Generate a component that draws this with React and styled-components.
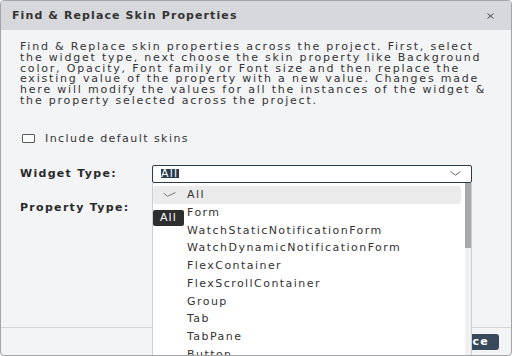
import React from "react";
import styled, { createGlobalStyle } from "styled-components";

const Global = createGlobalStyle`
  html, body { margin: 0; padding: 0; }
  body { width: 512px; height: 356px; overflow: hidden; background: #f3f4f6; font-family: "DejaVu Sans", "Liberation Sans", sans-serif; }
  * { box-sizing: border-box; }
`;

const Dialog = styled.div`
  width: 512px;
  height: 356px;
  border: 1px solid #a3a5a8;
  border-radius: 4px;
  overflow: hidden;
  display: flex;
  flex-direction: column;
  background: #f3f4f6;
`;

const Header = styled.div`
  height: 29px;
  flex: none;
  background: #d6d8dc;
  display: flex;
  align-items: center;
  justify-content: space-between;
  padding: 0 17px 0 11px;
`;

const Title = styled.div`
  font-weight: bold;
  font-size: 11px;
  letter-spacing: 1.1px;
  color: #333;
`;

const Close = styled.button`
  border: 0;
  background: none;
  padding: 0;
  width: 8px;
  height: 8px;
  display: flex;
  align-items: center;
  justify-content: center;
  color: #444;
`;

const Body = styled.div`
  flex: 1;
  padding: 12px 19px 0 19px;
  display: flex;
  flex-direction: column;
`;

const Description = styled.p`
  margin: 0;
  font-size: 11px;
  line-height: 10.8px;
  letter-spacing: 1.8px;
  color: #333;
`;

const CheckRow = styled.label`
  margin-top: 25px;
  height: 14px;
  display: flex;
  align-items: center;
  gap: 10px;
  padding-left: 2px;
  font-size: 11px;
  letter-spacing: 1.45px;
  color: #333;
`;

const Box = styled.span`
  width: 13px;
  height: 9px;
  border: 1px solid #5a5a5a;
  border-radius: 1px;
  background: #fafafa;
`;

const FormRow = styled.div`
  display: grid;
  grid-template-columns: 132px 320px;
  align-items: center;
  height: 18px;
  margin-top: ${(p) => p.$gap}px;
`;

const Label = styled.div`
  font-weight: bold;
  font-size: 11px;
  letter-spacing: 1.3px;
  color: #2a2a2a;
`;

const SelectWrap = styled.div`
  position: relative;
  height: 18px;
`;

const SelectBox = styled.div`
  height: 18px;
  border: 1px solid #2c3a48;
  border-radius: 2px;
  background: #fff;
  display: flex;
  align-items: center;
  justify-content: space-between;
  padding: 0 10px 0 8px;
`;

const SelectedText = styled.span`
  display: inline-block;
  background: #263a4f;
  color: #fff;
  font-size: 11px;
  line-height: 9px;
  letter-spacing: 1.2px;
  padding: 0 1px 0 0;
`;

const List = styled.div`
  position: absolute;
  top: 100%;
  left: 0;
  width: 320px;
  height: 200px;
  background: #fff;
  border-left: 1px solid #cfcfcf;
  border-right: 1px solid #cfcfcf;
  padding: 3px 10px 0 0;
  z-index: 5;
`;

const Track = styled.div`
  position: absolute;
  top: 0;
  right: 0;
  width: 6px;
  height: 100%;
  background: #f1f1f1;
`;

const Thumb = styled.div`
  width: 6px;
  height: 65px;
  background: #a9a9a9;
`;

const Item = styled.div`
  height: 17.75px;
  display: flex;
  align-items: center;
  border-radius: 3px;
  background: ${(p) => (p.$active ? "#ebebeb" : "transparent")};
  font-size: 11px;
  letter-spacing: 1.45px;
  color: #333;
`;

const CheckCell = styled.span`
  width: 34px;
  flex: none;
  display: flex;
  align-items: center;
  padding-left: 10px;
`;

const Tooltip = styled.div`
  position: absolute;
  left: 0;
  top: 27px;
  width: 31px;
  height: 16px;
  background: #2e2e2e;
  border-radius: 2px;
  color: #fff;
  font-size: 11px;
  letter-spacing: 1.2px;
  display: flex;
  align-items: center;
  justify-content: center;
`;

const Footer = styled.div`
  height: 28px;
  flex: none;
  border-top: 1px solid #d3d5d8;
  display: flex;
  align-items: center;
  justify-content: flex-end;
  padding-right: 12px;
`;

const PrimaryButton = styled.button`
  height: 16px;
  border: 0;
  border-radius: 3px;
  background: #37495b;
  color: #fff;
  font-family: inherit;
  font-weight: bold;
  font-size: 11px;
  letter-spacing: 1.3px;
  padding: 0 10px;
  display: flex;
  align-items: center;
`;

const items = [
  "All",
  "Form",
  "WatchStaticNotificationForm",
  "WatchDynamicNotificationForm",
  "FlexContainer",
  "FlexScrollContainer",
  "Group",
  "Tab",
  "TabPane",
  "Button",
  "Label",
];

export default function App() {
  return (
    <>
      <Global />
      <Dialog>
        <Header>
          <Title>Find &amp; Replace Skin Properties</Title>
          <Close aria-label="close">
            <svg width="7" height="6" viewBox="0 0 7 6">
              <path d="M0.5 0.5 L6.5 5.5 M6.5 0.5 L0.5 5.5" stroke="#444" strokeWidth="1" fill="none" />
            </svg>
          </Close>
        </Header>
        <Body>
          <Description>
            Find &amp; Replace skin properties across the project. First, select the widget type, next choose the skin property like Background color, Opacity, Font family or Font size and then replace the existing value of the property with a new value. Changes made here will modify the values for all the instances of the widget &amp; the property selected across the project.
          </Description>
          <CheckRow>
            <Box />
            Include default skins
          </CheckRow>
          <FormRow $gap={19}>
            <Label>Widget Type:</Label>
            <SelectWrap>
              <SelectBox>
                <SelectedText>All</SelectedText>
                <svg width="11" height="5" viewBox="0 0 11 5">
                  <path d="M0.5 0.5 L5.5 4.2 L10.5 0.5" stroke="#666" strokeWidth="1" fill="none" />
                </svg>
              </SelectBox>
              <List>
                <Track>
                  <Thumb />
                </Track>
                {items.map((it, i) => (
                  <Item key={it} $active={i === 0}>
                    <CheckCell>
                      {i === 0 && (
                        <svg width="13" height="5" viewBox="0 0 13 5">
                          <path d="M0.5 1 L4.5 4.3 L12.5 0.5" stroke="#777" strokeWidth="1" fill="none" />
                        </svg>
                      )}
                    </CheckCell>
                    {it}
                  </Item>
                ))}
                <Tooltip>All</Tooltip>
              </List>
            </SelectWrap>
          </FormRow>
          <FormRow $gap={16}>
            <Label>Property Type:</Label>
            <div />
          </FormRow>
        </Body>
        <Footer>
          <PrimaryButton>Replace</PrimaryButton>
        </Footer>
      </Dialog>
    </>
  );
}
